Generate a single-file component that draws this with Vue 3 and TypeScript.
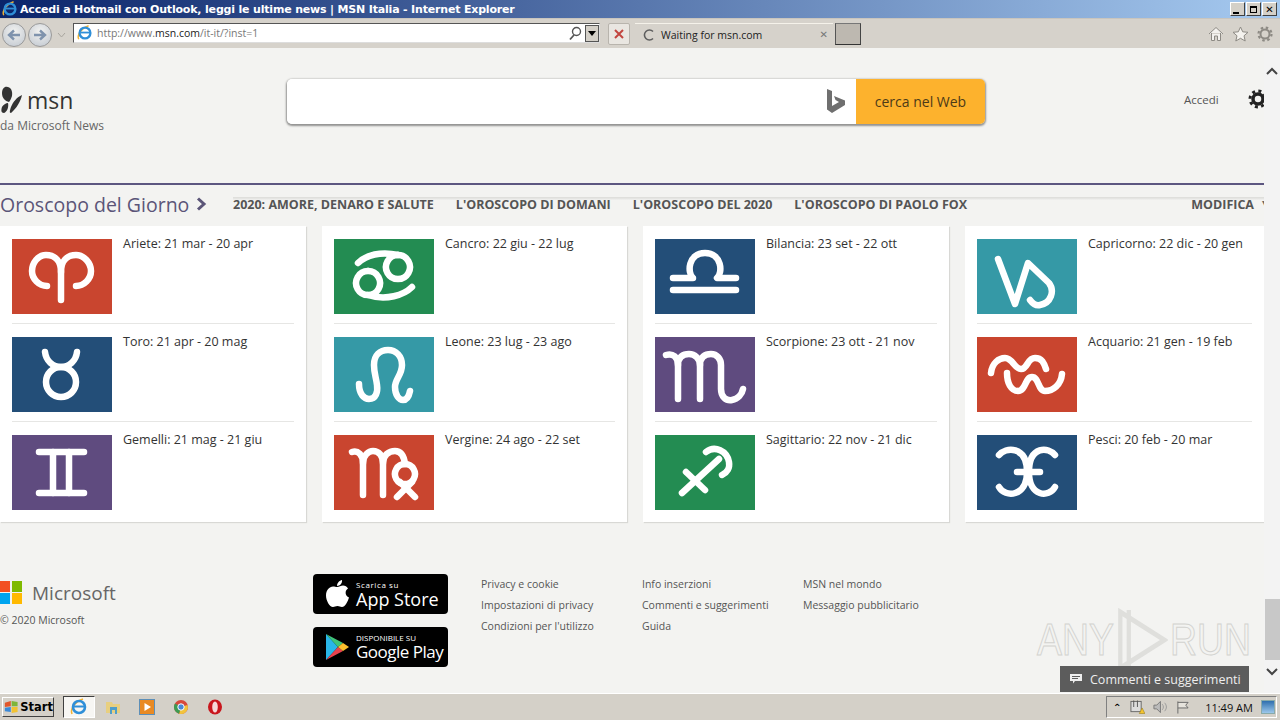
<script setup lang="ts">
interface Sign {
  label: string
  color: string
  paths: string[]
}

const red = '#c9452f'
const navy = '#234e78'
const purple = '#5f4b7f'
const green = '#238c52'
const teal = '#3599a6'

const columns: Sign[][] = [
  [
    { label: 'Ariete: 21 mar - 20 apr', color: red, paths: ['M49 61V33C49 22 43 16 34 16C26 16 20 24 20 32C20 40 27 47 35 47', 'M49 33C49 22 55 16 64 16C72 16 79 24 79 32C79 40 72 47 64 47'] },
    { label: 'Toro: 21 apr - 20 mag', color: navy, paths: ['M33 15C34 24 41 30 49 30C57 30 64 24 65 15', 'M49 30A15 15 0 1 0 49.01 60A15 15 0 1 0 49 30'] },
    { label: 'Gemelli: 21 mag - 21 giu', color: purple, paths: ['M27 17H72', 'M27 58H72', 'M41 17V58', 'M57 17V58'] }
  ],
  [
    { label: 'Cancro: 22 giu - 22 lug', color: green, paths: ['M24 24C32 16 47 12 64 16', 'M64 16A12 12 0 1 1 63.9 16', 'M78 48C70 56 52 62 34 56', 'M34 32A12 12 0 1 0 34.1 32'] },
    { label: 'Leone: 23 lug - 23 ago', color: teal, paths: ['M25 47C25 57 30 62 35 62C42 62 44 55 43 48C42 40 40 36 40 28C40 18 46 13 54 13C62 13 68 19 68 28C68 38 61 42 61 50C61 58 65 63 69 63C73 63 75 59 76 54'] },
    { label: 'Vergine: 24 ago - 22 set', color: red, paths: ['M18 17C24 15 29 20 29 28V60', 'M29 28C29 20 35 16 39 16C45 16 49 21 49 28V60', 'M49 28C49 20 55 16 61 16C67 16 70 21 71 29', 'M71 29A10 10 0 1 1 70.9 29', 'M63 62L78 47', 'M66 47L81 62'] }
  ],
  [
    { label: 'Bilancia: 23 set - 22 ott', color: navy, paths: ['M18 39H38C32 34 33 14 50 14C67 14 68 34 62 39H81', 'M18 51H81'] },
    { label: 'Scorpione: 23 ott - 21 nov', color: purple, paths: ['M11 18C18 16 23 20 23 28V62', 'M23 28C23 20 28 17 34 17C40 17 45 22 45 28V62', 'M45 28C45 20 50 17 56 17C62 17 66 22 66 28V52C66 60 71 64 77 63C83 62 87 57 88 52'] },
    { label: 'Sagittario: 22 nov - 21 dic', color: green, paths: ['M27 58L64 24', 'M31 37L50 55', 'M51 17C60 10 72 16 74 27C75 33 72 38 67 40'] }
  ],
  [
    { label: 'Capricorno: 22 dic - 20 gen', color: teal, paths: ['M21 20L38 65L51 24L72 44C78 52 74 64 63 66C59 67 56 65 53 61'] },
    { label: 'Acquario: 21 gen - 19 feb', color: red, paths: ['M14 36C15 26 22 21 28 21C36 21 37 32 44 32C51 32 50 21 58 21C65 21 67 26 69 32', 'M30 36C30 46 34 54 41 54C49 54 48 40 55 40C62 40 61 54 68 54C76 54 84 48 85 37'] },
    { label: 'Pesci: 20 feb - 20 mar', color: navy, paths: ['M22 20C28 12 50 10 50 37C50 62 28 63 22 52', 'M78 20C72 12 52 10 52 37C52 62 72 63 78 52', 'M40 37H63'] }
  ]
]

const navLinks = ['2020: AMORE, DENARO E SALUTE', "L'OROSCOPO DI DOMANI", "L'OROSCOPO DEL 2020", "L'OROSCOPO DI PAOLO FOX"]

const footerLinks = [
  ['Privacy e cookie', 'Impostazioni di privacy', 'Condizioni per l\'utilizzo'],
  ['Info inserzioni', 'Commenti e suggerimenti', 'Guida'],
  ['MSN nel mondo', 'Messaggio pubblicitario']
]
</script>

<template>
  <div class="window">
    <svg width="0" height="0" class="defs">
      <symbol id="ie" viewBox="0 0 20 20">
        <path d="M3 17C1 13 5 5 14 2" fill="none" stroke="#f2b233" stroke-width="1.6" />
        <circle cx="10" cy="10" r="6" fill="none" stroke="#2f8fd8" stroke-width="2.6" />
        <path d="M5 9.5H15.5" stroke="#2f8fd8" stroke-width="2" />
        <path d="M12 10H18" stroke="#fff" stroke-width="2" opacity="0" />
      </symbol>
    </svg>

    <div class="titlebar">
      <svg class="title-ie" width="18" height="18"><use href="#ie" /></svg>
      <span class="title-text">Accedi a Hotmail con Outlook, leggi le ultime news | MSN Italia - Internet Explorer</span>
      <div class="win-buttons">
        <span class="win-btn"><i class="min"></i></span>
        <span class="win-btn"><i class="max"></i></span>
        <span class="win-btn close">✕</span>
      </div>
    </div>

    <div class="toolbar">
      <div class="nav-round"><svg width="14" height="12" viewBox="0 0 14 12"><path d="M13 6H3M7 1.5L2 6L7 10.5" fill="none" stroke="#7f93ad" stroke-width="2.4" /></svg></div>
      <div class="nav-round"><svg width="14" height="12" viewBox="0 0 14 12"><path d="M1 6H11M7 1.5L12 6L7 10.5" fill="none" stroke="#7f93ad" stroke-width="2.4" /></svg></div>
      <svg class="nav-drop" width="9" height="6" viewBox="0 0 9 6"><path d="M1 1L4.500 5L8 1" fill="none" stroke="#a9a69f" /></svg>
      <div class="address">
        <svg width="18" height="18"><use href="#ie" /></svg>
        <span class="url">http://www.<b>msn.com</b>/it-it/?inst=1</span>
        <svg class="lens" width="14" height="15" viewBox="0 0 14 15"><circle cx="8.500" cy="5.500" r="4" fill="none" stroke="#555" stroke-width="1.400" /><path d="M6 9L2 13.500" stroke="#555" stroke-width="1.800" /></svg>
        <span class="addr-drop"><i></i></span>
      </div>
      <div class="stop"><svg width="12" height="12" viewBox="0 0 12 12"><path d="M2 2L10 10M10 2L2 10" stroke="#c2453f" stroke-width="2" /></svg></div>
      <div class="tab">
        <svg width="14" height="14" viewBox="0 0 14 14"><path d="M11 3.500A5 5 0 1 0 11 10.500" fill="none" stroke="#5e5e5e" stroke-width="1.600" /></svg>
        <span class="tab-text">Waiting for msn.com</span>
        <span class="tab-close">✕</span>
      </div>
      <div class="new-tab"></div>
      <div class="tool-icons">
        <svg width="16" height="16" viewBox="0 0 16 16"><path d="M1 8L8 1.500L15 8M3.500 7V14.500H6.500V10H9.500V14.500H12.500V7" fill="#f4f2ee" stroke="#8d8a84" /></svg>
        <svg width="17" height="16" viewBox="0 0 17 16"><path d="M8.500 1L10.700 5.800L16 6.300L12 9.800L13.200 15L8.500 12.300L3.800 15L5 9.800L1 6.300L6.300 5.800Z" fill="#f4f2ee" stroke="#8d8a84" /></svg>
        <svg width="16" height="16" viewBox="0 0 16 16"><circle cx="8" cy="8" r="4.500" fill="none" stroke="#8d8a84" stroke-width="2" /><circle cx="8" cy="8" r="6.500" fill="none" stroke="#8d8a84" stroke-width="2.200" stroke-dasharray="2.500 2.600" /></svg>
      </div>
    </div>

    <div class="viewport">
      <div class="page">
        <header class="masthead">
          <div class="brand">
            <div class="logo">
              <svg width="24" height="28" viewBox="0 0 24 28"><path d="M4 1C9 0 12 4 11 10C10 13 9 15 8 16C4 15 1 12 1 7C1 4 2 2 4 1ZM7 17C8 21 6 26 3 27C0 27 0 24 1 21C2 19 5 17 7 17ZM21 9C20 15 15 23 10 27C8 27 9 24 10 21C12 16 16 11 21 9Z" fill="#333" /></svg>
              <span class="logo-text">msn</span>
            </div>
            <div class="brand-sub">da Microsoft News</div>
          </div>
          <div class="search">
            <div class="search-input">
              <svg width="20" height="25" viewBox="0 0 20 25"><path d="M1 0L6 2V17L13 13L9.500 11L8 7L19 11.500V16L6 24L1 20.500Z" fill="#6f6f6f" /></svg>
            </div>
            <div class="search-btn">cerca nel Web</div>
          </div>
          <span class="signin">Accedi</span>
          <svg class="gear" width="20" height="20" viewBox="0 0 20 20"><circle cx="10" cy="10" r="5" fill="none" stroke="#222" stroke-width="3.500" /><circle cx="10" cy="10" r="8" fill="none" stroke="#222" stroke-width="3" stroke-dasharray="3 3.300" /></svg>
        </header>

        <nav class="section-nav">
          <div class="section-title">
            <span>Oroscopo del Giorno</span>
            <svg width="11" height="14" viewBox="0 0 11 14"><path d="M2 1.500L8 7L2 12.500" fill="none" stroke="#5b5578" stroke-width="3" /></svg>
          </div>
          <div class="links">
            <span v-for="link in navLinks" :key="link">{{ link }}</span>
          </div>
          <span class="modifica">MODIFICA</span>
          <span class="caret">▾</span>
        </nav>

        <section class="cards">
          <div v-for="(col, i) in columns" :key="i" class="card">
            <div v-for="sign in col" :key="sign.label" class="row">
              <div class="tile" :style="{ background: sign.color }">
                <svg width="100" height="75" viewBox="0 0 100 75">
                  <path v-for="d in sign.paths" :key="d" :d="d" fill="none" stroke="#fff" stroke-width="6.500" stroke-linecap="round" stroke-linejoin="round" />
                </svg>
              </div>
              <span class="row-label">{{ sign.label }}</span>
            </div>
          </div>
        </section>

        <footer class="footer">
          <div class="ms">
            <div class="ms-line">
              <div class="ms-logo"><i class="r"></i><i class="g"></i><i class="b"></i><i class="y"></i></div>
              <span class="ms-name">Microsoft</span>
            </div>
            <div class="copy">© 2020 Microsoft</div>
          </div>
          <div class="badges">
            <div class="badge">
              <svg class="apple" width="24" height="29" viewBox="0 0 24 29"><path d="M12 7C14 7 16 5.500 18 5.500C20 5.500 22 6.500 23 8.500C19.500 10.500 20 16 24 17.500C22.500 22 20 27 17 27C15 27 14.500 26 12.500 26C10.500 26 9.500 27 8 27C4.500 27 1 20.500 1 15.500C1 10 4.500 6.500 8 6.500C9.500 6.500 11 7 12 7ZM12 6C12 3 14.500 .5 17 0C17.500 3 15 6 12 6Z" fill="#fff" /></svg>
              <div class="badge-text">
                <span class="small">Scarica su</span>
                <span class="big">App Store</span>
              </div>
            </div>
            <div class="badge">
              <svg class="play" width="24" height="28" viewBox="0 0 24 28">
                <path d="M1 1L13 14L1 27Z" fill="#29b6e8" />
                <path d="M1 1L18 10L13 14Z" fill="#3fc47a" />
                <path d="M1 27L18 18L13 14Z" fill="#e8424e" />
                <path d="M18 10L24 14L18 18L13 14Z" fill="#fbc02d" />
              </svg>
              <div class="badge-text gp">
                <span class="small">DISPONIBILE SU</span>
                <span class="big">Google Play</span>
              </div>
            </div>
          </div>
          <div v-for="(col, i) in footerLinks" :key="i" class="foot-col">
            <span v-for="item in col" :key="item">{{ item }}</span>
          </div>
        </footer>
      </div>

      <div class="scrollbar">
        <svg width="12" height="8" viewBox="0 0 12 8"><path d="M1 7L6 2L11 7" fill="none" stroke="#444" stroke-width="2" /></svg>
        <div class="thumb"></div>
        <svg width="12" height="8" viewBox="0 0 12 8"><path d="M1 1L6 6L11 1" fill="none" stroke="#444" stroke-width="2" /></svg>
      </div>

      <div class="watermark">
        <span>ANY</span>
        <svg width="62" height="64" viewBox="0 0 62 64"><path d="M6 4L58 32L6 60ZM16 2V62" fill="none" stroke="#d6d6d3" stroke-width="5" opacity=".7" /></svg>
        <span>RUN</span>
      </div>

      <div class="feedback">
        <svg width="12" height="10" viewBox="0 0 12 10"><path d="M0 0H12V7H5L3 9.500V7H0Z" fill="#eee" /><path d="M2 2.500H10M2 4.500H8" stroke="#5c5c5c" /></svg>
        <span>Commenti e suggerimenti</span>
      </div>
    </div>

    <div class="taskbar">
      <div class="start">
        <svg width="18" height="16" viewBox="0 0 18 16">
          <path d="M1 3L8 1V7L1 8Z" fill="#e2572b" />
          <path d="M9 1L16 2V7L9 7Z" fill="#7eb53a" />
          <path d="M1 9L8 8V14L1 13Z" fill="#3a89d8" />
          <path d="M9 8H16V14L9 15Z" fill="#f1c232" />
        </svg>
        <span>Start</span>
      </div>
      <div class="task-ie"><svg width="20" height="20"><use href="#ie" /></svg></div>
      <div class="task-icons">
        <svg width="16" height="16" viewBox="0 0 16 16"><path d="M1 3H7L8 5H15V14H1Z" fill="#e8cf7f" /><path d="M5 8H12V15H10V11H7V15H5Z" fill="#4f9ec9" /></svg>
        <svg width="16" height="16" viewBox="0 0 16 16"><rect x=".5" y=".5" width="15" height="15" fill="#e98a23" stroke="#5d8fb8" /><path d="M5.500 4L12 8L5.500 12Z" fill="#fff" /></svg>
        <svg width="16" height="16" viewBox="0 0 16 16"><circle cx="8" cy="8" r="7" fill="#d8483b" /><path d="M8 8L14.500 6A7 7 0 0 1 6 14.800Z" fill="#f2c43c" /><path d="M8 8L6 14.800A7 7 0 0 1 2 4.500Z" fill="#3d9b52" /><circle cx="8" cy="8" r="3.200" fill="#4a88d8" stroke="#fff" /></svg>
        <svg width="16" height="16" viewBox="0 0 16 16"><ellipse cx="8" cy="8" rx="7" ry="7.500" fill="#c9161d" /><ellipse cx="8" cy="8" rx="2.800" ry="5.500" fill="#f6d8d8" /></svg>
      </div>
      <div class="tray">
        <span class="tray-up">⌃</span>
        <svg width="16" height="16" viewBox="0 0 16 16"><rect x="1" y="2" width="11" height="11" fill="#ddd" stroke="#666" /><path d="M4 1V8M8 1V8" stroke="#555" /><path d="M10 15L13 9L16 15Z" fill="#f4c430" stroke="#8a6d00" stroke-width=".5" /></svg>
        <svg width="16" height="14" viewBox="0 0 16 14"><path d="M1 5H4L8 1V13L4 9H1Z" fill="#bbb" stroke="#777" /><path d="M10 4C11.500 6 11.500 8 10 10M12.500 2.500C15 5.500 15 8.500 12.500 11.500" fill="none" stroke="#999" /></svg>
        <svg width="14" height="15" viewBox="0 0 14 15"><path d="M2 1V14M2 2H13L10.500 5L13 8H2" fill="#e6e3dc" stroke="#666" /></svg>
        <span class="clock">11:49 AM</span>
        <div class="show-desk"></div>
      </div>
    </div>
  </div>
</template>

<style>
html, body {
  margin: 0;
  overflow: hidden;
}
</style>

<style scoped>
.window {
  width: 1280px;
  height: 720px;
  display: flex;
  flex-direction: column;
  overflow: hidden;
  font-family: "Open Sans", "Noto Sans", sans-serif;
  background: #f3f3f1;
}

.defs {
  position: absolute;
}

.titlebar {
  height: 18px;
  flex: none;
  display: flex;
  align-items: center;
  gap: 0;
  background: linear-gradient(90deg, #0a246a, #a6caf0);
}

.title-ie {
  margin: 0 1px 0 1px;
}

.title-text {
  font-family: "DejaVu Sans", sans-serif;
  font-weight: 700;
  font-size: 11px;
  letter-spacing: -0.18px;
  color: #fff;
  white-space: nowrap;
}

.win-buttons {
  margin-left: auto;
  margin-right: 3px;
  display: flex;
  gap: 1px;
}

.win-btn {
  width: 15px;
  height: 14px;
  background: #d4d0c8;
  border: 1px solid;
  border-color: #fff #404040 #404040 #fff;
  box-sizing: border-box;
  display: flex;
  align-items: center;
  justify-content: center;
  position: relative;
}

.win-btn.close {
  font: 700 10px "DejaVu Sans", sans-serif;
  color: #000;
}

.win-btn .min {
  width: 6px;
  height: 2px;
  background: #000;
  margin-top: 7px;
  margin-right: 3px;
}

.win-btn .max {
  width: 7px;
  height: 7px;
  border: 1px solid #000;
  border-top-width: 2px;
  box-sizing: border-box;
}

.toolbar {
  height: 30px;
  flex: none;
  display: flex;
  align-items: flex-start;
  box-sizing: border-box;
  padding: 4px 0 0 2px;
  background: #d6d2cb;
  border-top: 1px solid #c9c5be;
}

.nav-round {
  width: 24px;
  height: 24px;
  margin-right: 2px;
  border-radius: 50%;
  box-sizing: border-box;
  border: 1px solid #9a9a9a;
  background: radial-gradient(circle at 50% 35%, #f2f2f0, #bfc6cf);
  display: flex;
  align-items: center;
  justify-content: center;
}

.nav-drop {
  margin: 9px 7px 0 3px;
}

.address {
  width: 527px;
  height: 20px;
  margin-top: 0;
  box-sizing: border-box;
  background: #fff;
  border: 1px solid;
  border-color: #555 #ddd #ddd #555;
  display: flex;
  align-items: center;
  padding-left: 2px;
}

.url {
  margin-left: 3px;
  font-size: 10.5px;
  color: #777;
  white-space: nowrap;
}

.url b {
  font-weight: 400;
  color: #222;
}

.lens {
  margin-left: auto;
  margin-right: 3px;
}

.addr-drop {
  width: 14px;
  height: 17px;
  background: #d4d0c8;
  border: 1px solid #555;
  box-sizing: border-box;
  display: flex;
  align-items: center;
  justify-content: center;
}

.addr-drop i {
  border: 4px solid transparent;
  border-top: 5px solid #000;
  border-bottom: 0;
}

.stop {
  width: 22px;
  height: 22px;
  margin-left: 8px;
  box-sizing: border-box;
  border: 1px solid #b8b4ad;
  border-radius: 2px;
  background: #e9e6e1;
  display: flex;
  align-items: center;
  justify-content: center;
}

.tab {
  width: 198px;
  height: 22px;
  margin-left: 5px;
  box-sizing: border-box;
  border-top: 1px solid #f5f2ea;
  display: flex;
  align-items: center;
  padding: 0 5px 0 7px;
  gap: 5px;
}

.tab-text {
  font-size: 10.5px;
  color: #222;
  white-space: nowrap;
}

.tab-close {
  margin-left: auto;
  font: 700 10px "DejaVu Sans", sans-serif;
  color: #777;
}

.new-tab {
  width: 26px;
  height: 22px;
  margin-left: 2px;
  box-sizing: border-box;
  background: #bdb8b0;
  border: 1px solid;
  border-color: #777 #444 #333 #555;
}

.tool-icons {
  margin-left: auto;
  margin-right: 7px;
  margin-top: 3px;
  display: flex;
  gap: 8px;
}

.viewport {
  flex: 1;
  min-height: 0;
  display: flex;
  position: relative;
  overflow: hidden;
}

.page {
  width: 1264px;
  flex: none;
  overflow: hidden;
}

.masthead {
  height: 135px;
  box-sizing: border-box;
  padding-top: 31px;
  display: flex;
  align-items: flex-start;
}

.brand {
  width: 287px;
  flex: none;
  color: #555;
}

.logo {
  display: flex;
  align-items: center;
  gap: 2px;
  height: 40px;
  margin-top: -1px;
  padding-left: 1px;
  box-sizing: border-box;
  height: 44px;
}

.logo-text {
  font-size: 23px;
  color: #333;
  line-height: 1;
}

.brand-sub {
  font-size: 12px;
  line-height: 14px;
  margin-top: -3px;
  color: #666;
}

.search {
  width: 698px;
  height: 45px;
  flex: none;
  display: flex;
  border-radius: 5px;
  overflow: hidden;
  box-shadow: 0 1px 2px 1px rgba(0, 0, 0, 0.4);
}

.search-input {
  flex: 1;
  background: #fff;
  display: flex;
  align-items: center;
  justify-content: flex-end;
  padding-right: 10px;
}

.search-btn {
  width: 129px;
  background: #fdb22d;
  color: #4c3a18;
  font-size: 14px;
  display: flex;
  align-items: center;
  justify-content: center;
}

.signin {
  margin-left: 199px;
  margin-top: 13px;
  font-size: 11.500px;
  color: #555;
}

.gear {
  margin-left: 29px;
  margin-top: 10px;
  margin-right: -20px;
}

.section-nav {
  height: 43px;
  box-sizing: border-box;
  border-top: 2px solid #5c5680;
  display: flex;
  align-items: center;
  padding-bottom: 3px;
  position: relative;
  background: linear-gradient(#f3f3f1 12px, #dcdcd9 12px, #e8e8e6 14px, #f3f3f1 15px);
}

.section-title {
  display: flex;
  align-items: center;
  gap: 7px;
  width: 233px;
  flex: none;
  font-size: 19.500px;
  color: #5b5578;
  background: #f3f3f1;
}

.links {
  display: flex;
  gap: 22px;
  font-size: 12.500px;
  font-weight: 700;
  color: #555;
  white-space: nowrap;
}

.modifica {
  margin-left: auto;
  margin-right: 10px;
  font-size: 12.500px;
  font-weight: 700;
  color: #555;
}

.caret {
  position: absolute;
  right: -3px;
  top: 10px;
  font-size: 10px;
  color: #666;
}

.cards {
  display: grid;
  grid-template-columns: 306px 305px 306px 299px;
  gap: 16px;
  height: 296px;
}

.card {
  background: #fff;
  box-shadow: 1px 1px 1px #d8d8d5;
  padding: 0 12px;
  box-sizing: border-box;
}

.row {
  height: 98px;
  box-sizing: border-box;
  padding-top: 13px;
  display: flex;
  gap: 11px;
  border-bottom: 1px solid #e6e6e4;
}

.row:last-child {
  border-bottom: none;
}

.tile {
  width: 100px;
  height: 75px;
  flex: none;
}

.tile svg {
  display: block;
}

.row-label {
  font-size: 12.500px;
  line-height: 14px;
  margin-top: -2px;
  color: #333;
  white-space: nowrap;
}

.footer {
  display: flex;
  align-items: flex-start;
  padding-top: 52px;
}

.ms {
  width: 313px;
  flex: none;
  color: #666;
}

.ms-line {
  display: flex;
  align-items: center;
  gap: 10px;
  height: 23px;
  margin-top: 7px;
}

.ms-logo {
  width: 22px;
  height: 23px;
  display: grid;
  grid-template-columns: 10px 10px;
  grid-template-rows: 11px 11px;
  gap: 1px 2px;
}

.ms-logo i.r { background: #f25022; }
.ms-logo i.g { background: #7fba00; }
.ms-logo i.b { background: #00a4ef; }
.ms-logo i.y { background: #ffb900; }

.ms-name {
  font-size: 19px;
  color: #666;
}

.copy {
  font-size: 10.500px;
  margin-top: 9px;
  color: #555;
}

.badges {
  width: 168px;
  flex: none;
  display: flex;
  flex-direction: column;
  gap: 13px;
}

.badge {
  width: 135px;
  height: 40px;
  background: #000;
  border-radius: 4px;
  color: #fff;
  display: flex;
  align-items: center;
  padding-left: 12px;
  box-sizing: border-box;
  gap: 7px;
}

.badge-text {
  display: flex;
  flex-direction: column;
  line-height: 1;
}

.badge-text .small {
  font-size: 8px;
  letter-spacing: 0.6px;
}

.badge-text .big {
  font-size: 18px;
  font-weight: 500;
  margin-top: 1px;
}

.badge-text.gp .small {
  letter-spacing: 0;
}

.badge-text.gp .big {
  font-size: 17px;
  letter-spacing: -0.5px;
}

.foot-col {
  width: 161px;
  flex: none;
  display: flex;
  flex-direction: column;
  gap: 6px;
  font-size: 10.500px;
  line-height: 15px;
  color: #555;
  white-space: nowrap;
  margin-top: 3px;
}

.scrollbar {
  width: 16px;
  flex: none;
  background: #f3f3f3;
  display: flex;
  flex-direction: column;
  align-items: center;
  padding-top: 19px;
  padding-bottom: 17px;
  box-sizing: border-box;
}

.thumb {
  width: 15px;
  height: 61px;
  margin-top: auto;
  margin-bottom: 8px;
  background: #c8c8c8;
}

.watermark {
  position: absolute;
  left: 1037px;
  top: 560px;
  display: flex;
  align-items: center;
  gap: 2px;
  font: 400 44px "Liberation Sans", sans-serif;
  color: transparent;
  -webkit-text-stroke: 1px #d2d2cf;
  transform: scaleX(0.85);
  transform-origin: left center;
}

.feedback {
  position: absolute;
  left: 1060px;
  top: 618px;
  width: 189px;
  height: 26px;
  background: #5c5c5c;
  color: #eee;
  font-size: 12.500px;
  display: flex;
  align-items: center;
  padding-left: 10px;
  gap: 8px;
  box-sizing: border-box;
}

.taskbar {
  height: 27px;
  flex: none;
  box-sizing: border-box;
  border-top: 1px solid #fff;
  background: #d4d0c8;
  display: flex;
  align-items: center;
  padding: 0 3px 0 2px;
}

.start {
  width: 52px;
  height: 20px;
  box-sizing: border-box;
  border: 1px solid;
  border-color: #fff #404040 #404040 #fff;
  display: flex;
  align-items: center;
  gap: 1px;
  font: 700 11.500px "DejaVu Sans", sans-serif;
  color: #000;
  padding-left: 1px;
}

.task-ie {
  width: 32px;
  height: 22px;
  margin-left: 9px;
  box-sizing: border-box;
  background: #f7f6f3;
  border: 1px solid;
  border-color: #404040 #fff #fff #404040;
  display: flex;
  align-items: center;
  justify-content: center;
}

.task-icons {
  display: flex;
  gap: 18px;
  margin-left: 10px;
}

.tray {
  margin-left: auto;
  width: 171px;
  height: 22px;
  box-sizing: border-box;
  border: 1px solid;
  border-color: #808080 #fff #fff #808080;
  display: flex;
  align-items: center;
  padding: 0 1px 0 6px;
  gap: 8px;
}

.tray-up {
  font: 700 10px "DejaVu Sans", sans-serif;
  width: 10px;
}

.clock {
  font: 400 11px "Open Sans", sans-serif;
  color: #111;
  margin-left: 8px;
  white-space: nowrap;
}

.show-desk {
  width: 15px;
  height: 14px;
  margin-left: auto;
  background: linear-gradient(#2f6fae, #9cc7ea);
  border: 1px solid #8aa;
  box-sizing: border-box;
}
</style>
